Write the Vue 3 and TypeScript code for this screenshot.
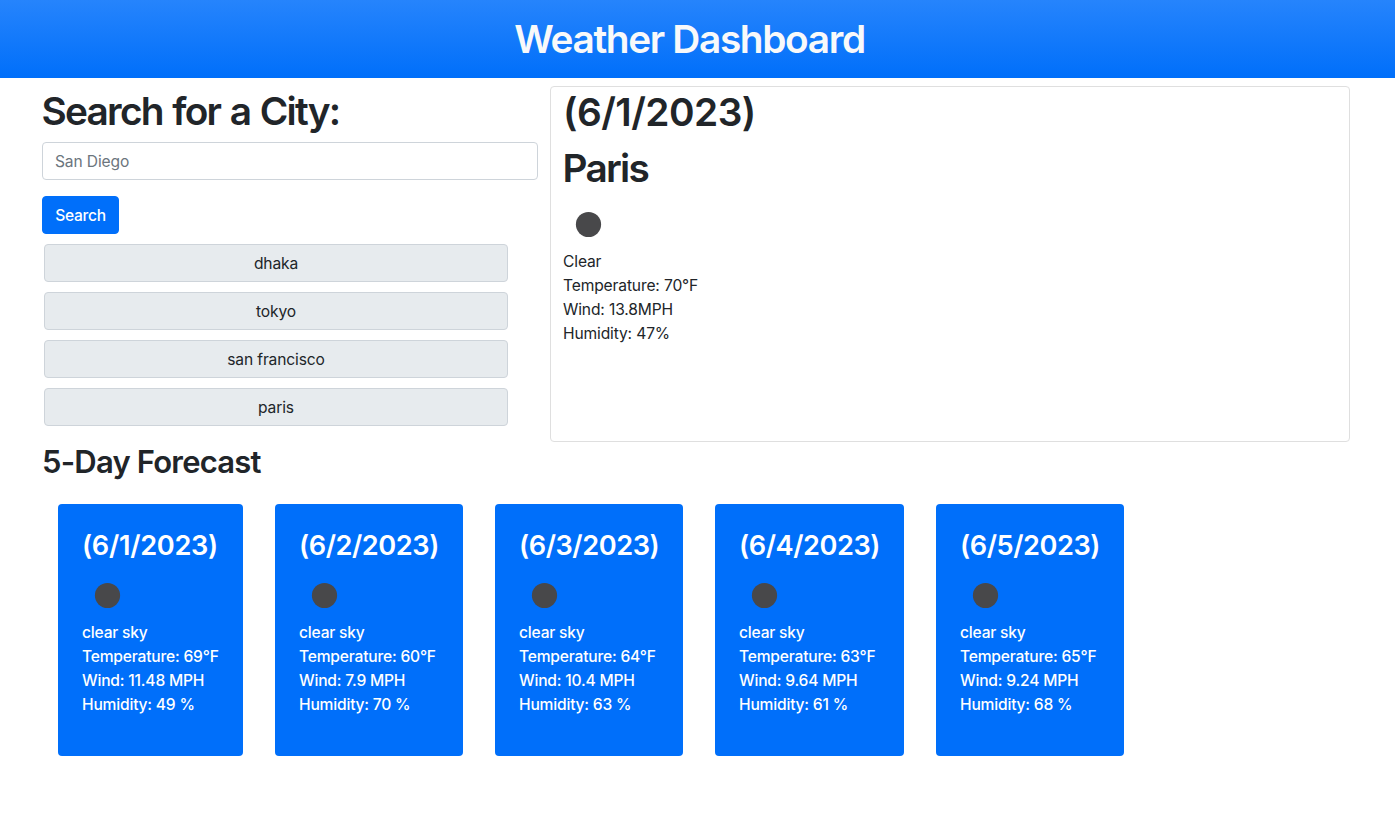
<script setup lang="ts">
import { ref } from 'vue'

interface Forecast {
  date: string
  temp: number
  wind: string
  humidity: number
}

const query = ref('')
const history: string[] = ['dhaka', 'tokyo', 'san francisco', 'paris']
const forecast: Forecast[] = [
  { date: '6/1/2023', temp: 69, wind: '11.48', humidity: 49 },
  { date: '6/2/2023', temp: 60, wind: '7.9', humidity: 70 },
  { date: '6/3/2023', temp: 64, wind: '10.4', humidity: 63 },
  { date: '6/4/2023', temp: 63, wind: '9.64', humidity: 61 },
  { date: '6/5/2023', temp: 65, wind: '9.24', humidity: 68 },
]
</script>

<template>
  <div class="page">
    <header class="banner"><h1 class="title">Weather Dashboard</h1></header>
    <main class="content">
      <div class="top">
        <section class="search">
          <h1 class="search-title">Search for a City:</h1>
          <input v-model="query" class="field" type="text" placeholder="San Diego" />
          <button class="submit" type="button">Search</button>
          <div class="history">
            <button v-for="city in history" :key="city" class="city" type="button">{{ city }}</button>
          </div>
        </section>
        <section class="current">
          <h1 class="date">(6/1/2023)</h1>
          <h1 class="name">Paris</h1>
          <svg class="icon" viewBox="0 0 50 50"><circle cx="25.5" cy="24.5" r="12.6" /></svg>
          <p>Clear</p>
          <p>Temperature: 70°F</p>
          <p>Wind: 13.8MPH</p>
          <p>Humidity: 47%</p>
        </section>
      </div>
      <h2 class="forecast-title">5-Day Forecast</h2>
      <div class="cards">
        <article v-for="day in forecast" :key="day.date" class="card">
          <h3 class="day">({{ day.date }})</h3>
          <svg class="icon" viewBox="0 0 50 50"><circle cx="25.5" cy="24.5" r="12.6" /></svg>
          <p>clear sky</p>
          <p>Temperature: {{ day.temp }}°F</p>
          <p>Wind: {{ day.wind }} MPH</p>
          <p>Humidity: {{ day.humidity }} %</p>
        </article>
      </div>
    </main>
  </div>
</template>

<style>
body {
  margin: 0;
  background: #fff;
}
</style>

<style scoped>
.page,
.page * {
  box-sizing: border-box;
}
.page {
  min-height: 823px;
  color: #212529;
  font-family: Inter, "Liberation Sans", sans-serif;
  font-size: 15.6px;
  line-height: 24px;
  letter-spacing: -0.14px;
}
h1,
h2,
h3,
p {
  margin: 0;
}
h1,
h2,
h3 {
  font-weight: 560;
  white-space: nowrap;
}
h1 {
  font-size: 38.8px;
  line-height: 48px;
  letter-spacing: -1.75px;
}
p {
  white-space: nowrap;
}
.banner {
  height: 78px;
  padding: 15px 16px 0 0;
  background: linear-gradient(180deg, #2684fc, #006ffa);
  color: #f8f9fa;
  text-align: center;
}
.title {
  letter-spacing: -1.35px;
}
.content {
  padding: 8px 45px 0 42px;
}
.top {
  display: grid;
  grid-template-columns: 496px 800px;
  gap: 12px;
}
.search {
  display: flex;
  flex-direction: column;
  align-items: flex-start;
}
.search-title {
  margin: 1px 0 7px -0.5px;
  word-spacing: 1.5px;
}
.field,
.submit,
.city {
  height: 38px;
  padding: 1px 12px 0;
  border: 1px solid #ced4da;
  border-radius: 4px;
  font: inherit;
  letter-spacing: inherit;
  color: inherit;
}
.field {
  width: 100%;
  padding-top: 0;
  background: #fff;
}
.field::placeholder {
  color: #6c757d;
  opacity: 1;
}
.submit {
  width: 77px;
  margin-top: 16px;
  border-color: #006ffa;
  background: #006ffa;
  color: #fff;
  font-weight: 450;
  letter-spacing: -0.28px;
}
.history {
  display: flex;
  flex-direction: column;
  gap: 10px;
  width: 464px;
  margin: 10px 0 0 2px;
}
.city {
  background: #e7ebee;
}
.current {
  height: 356px;
  padding: 1px 12px;
  border: 1px solid #dfdfdf;
  border-radius: 4px;
}
.date {
  letter-spacing: -0.55px;
}
.name {
  margin: 8px 0 0 -0.5px;
}
.icon {
  display: block;
  width: 50px;
  height: 50px;
  fill: #48484a;
}
.current .icon {
  margin-top: 8px;
}
.forecast-title {
  font-size: 31px;
  line-height: 38px;
  letter-spacing: -0.8px;
  margin-top: 1px;
}
.cards {
  display: grid;
  grid-template-columns: 185px 188px 188px 189px 188px;
  gap: 32px;
  padding: 23px 16px 0;
}
.card {
  height: 252px;
  padding: 25px 24px 0;
  border-radius: 4px;
  background: #006ffa;
  color: #fff;
  font-weight: 450;
  letter-spacing: -0.2px;
}
.day {
  font-size: 27.2px;
  line-height: 34px;
  letter-spacing: -0.45px;
}
.card:first-child .day {
  letter-spacing: -0.3px;
}
.card .icon {
  margin-top: 8px;
}
</style>
